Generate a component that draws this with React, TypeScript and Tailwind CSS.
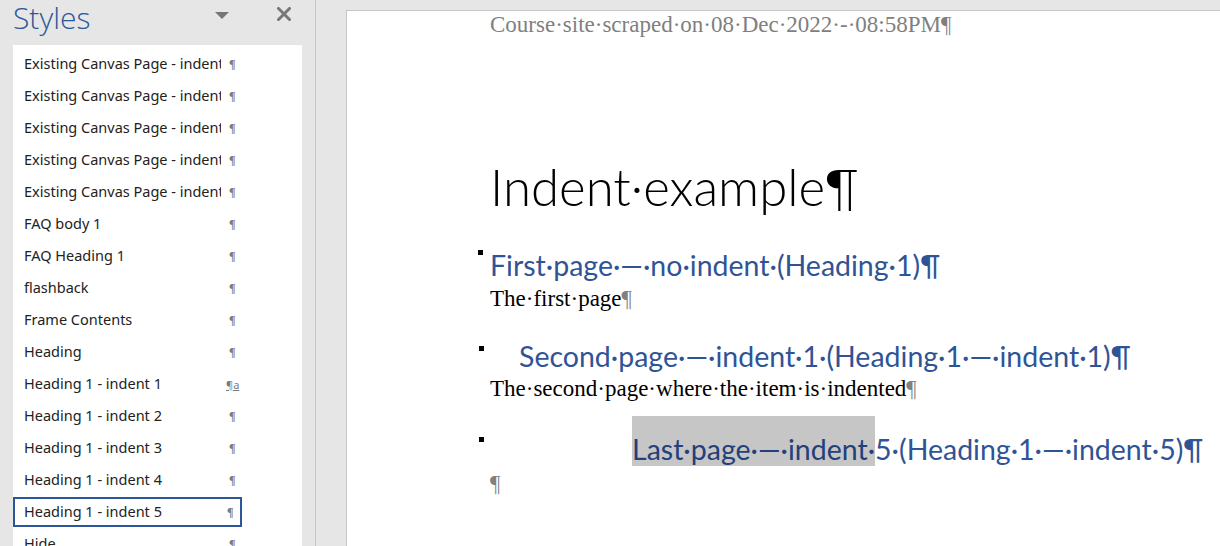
import React from "react";

const items: { name: string; mark: "p" | "a"; selected?: boolean }[] = [
  { name: "Existing Canvas Page - indent 1", mark: "p" },
  { name: "Existing Canvas Page - indent 2", mark: "p" },
  { name: "Existing Canvas Page - indent 3", mark: "p" },
  { name: "Existing Canvas Page - indent 4", mark: "p" },
  { name: "Existing Canvas Page - indent 5", mark: "p" },
  { name: "FAQ body 1", mark: "p" },
  { name: "FAQ Heading 1", mark: "p" },
  { name: "flashback", mark: "p" },
  { name: "Frame Contents", mark: "p" },
  { name: "Heading", mark: "p" },
  { name: "Heading 1 - indent 1", mark: "a" },
  { name: "Heading 1 - indent 2", mark: "p" },
  { name: "Heading 1 - indent 3", mark: "p" },
  { name: "Heading 1 - indent 4", mark: "p" },
  { name: "Heading 1 - indent 5", mark: "p", selected: true },
  { name: "Hide", mark: "p" },
];

const ui = { fontFamily: '"Noto Sans", "Open Sans", sans-serif' };
const serif = { fontFamily: '"Liberation Serif", "Times New Roman", serif' };
const head = { fontFamily: 'Lato, "Open Sans", sans-serif' };

function Bullet({ top }: { top: string }) {
  return <div className={"w-[5px] h-[5px] bg-black shrink-0 " + top} />;
}

export default function App() {
  return (
    <div className="flex w-[1220px] h-[546px] overflow-hidden bg-[#e6e6e6]">
      {/* Styles pane */}
      <div className="w-[316px] shrink-0 border-r border-[#c6c6c6] flex flex-col" style={ui}>
        <div className="h-[45px] shrink-0 flex items-start pl-[13px] pr-[24px]">
          <span
            className="text-[30px] leading-[40px] -mt-[2px] font-light text-[#2b579a]"
            style={{ fontFamily: '"Open Sans", "Noto Sans", sans-serif' }}
          >
            Styles
          </span>
          <span className="ml-auto mt-[12px] w-0 h-0 border-l-[7px] border-r-[7px] border-t-[7px] border-l-transparent border-r-transparent border-t-[#777777]" />
          <svg width="14" height="14" viewBox="0 0 14 14" className="ml-[48px] mt-[7px]">
            <path d="M1.5 1.5 L12.5 12.5 M12.5 1.5 L1.5 12.5" stroke="#777777" strokeWidth="3" strokeLinecap="square" />
          </svg>
        </div>
        <div className="ml-[13px] w-[289px] flex-1 bg-white pt-[3px]">
          {items.map((it, i) =>
            it.selected ? (
              <div key={i} className="flex items-center h-[30px] my-[1px] w-[229px] pl-[9px] border-2 border-[#2b579a]">
                <span className="w-[197px] overflow-hidden whitespace-nowrap text-[14.5px] text-[#222222]">{it.name}</span>
                <span className="ml-[6px] text-[12px] font-bold text-[#7a7a7a]" style={serif}>¶</span>
              </div>
            ) : (
              <div key={i} className="flex items-center h-[32px] w-[229px] pl-[11px]">
                <span className="w-[197px] overflow-hidden whitespace-nowrap text-[14.5px] text-[#222222]">{it.name}</span>
                {it.mark === "p" ? (
                  <span className="ml-[8px] text-[12px] font-bold text-[#7a7a7a]" style={serif}>¶</span>
                ) : (
                  <span className="ml-[5px] text-[11px] text-[#7a7a7a] underline leading-none" style={ui}>¶a</span>
                )}
              </div>
            )
          )}
        </div>
      </div>

      {/* Document area */}
      <div className="flex-1 pl-[30px] pt-[10px]">
        <div className="h-full bg-white border-l border-t border-[#c6c6c6] pl-[143px] pt-[2px]">
          <div className="text-[23px] leading-[24px] text-[#7f7f7f] whitespace-nowrap" style={serif}>
            Course·site·scraped·on·08·Dec·2022·-·08:58PM¶
          </div>

          <div className="mt-[121px] text-[51px] leading-[58px] font-light text-black whitespace-nowrap" style={head}>
            Indent·example¶
          </div>

          <div className="mt-[32px] flex items-start ml-[-12px] whitespace-nowrap">
            <Bullet top="mt-[2px]" />
            <span className="ml-[7px] text-[28.5px] leading-[34px] text-[#2f5496]" style={head}>
              First·page·—·no·indent·(Heading·1)¶
            </span>
          </div>
          <div className="mt-[4px] text-[23px] leading-[26px] text-black whitespace-nowrap" style={serif}>
            The·first·page<span className="text-[#808080]">¶</span>
          </div>

          <div className="mt-[27px] flex items-start ml-[-11px] whitespace-nowrap">
            <Bullet top="mt-[7px]" />
            <span className="ml-[35px] text-[28.5px] leading-[34px] text-[#2f5496]" style={head}>
              Second·page·—·indent·1·(Heading·1·—·indent·1)¶
            </span>
          </div>
          <div className="mt-[3px] text-[23px] leading-[26px] text-black whitespace-nowrap" style={serif}>
            The·second·page·where·the·item·is·indented<span className="text-[#808080]">¶</span>
          </div>

          <div className="mt-[14px] flex items-start ml-[-11px] whitespace-nowrap">
            <Bullet top="mt-[21px]" />
            <span className="ml-[148px] text-[28.5px] leading-[34px] text-[#2f5496]" style={head}>
              <span className="inline-block pt-[16px] bg-[#c6c6c6] text-[#22407a]">Last·page·—·indent·</span>
              5·(Heading·1·—·indent·5)¶
            </span>
          </div>
          <div className="mt-[5px] text-[23px] leading-[26px] text-[#808080]" style={serif}>
            ¶
          </div>
        </div>
      </div>
    </div>
  );
}
